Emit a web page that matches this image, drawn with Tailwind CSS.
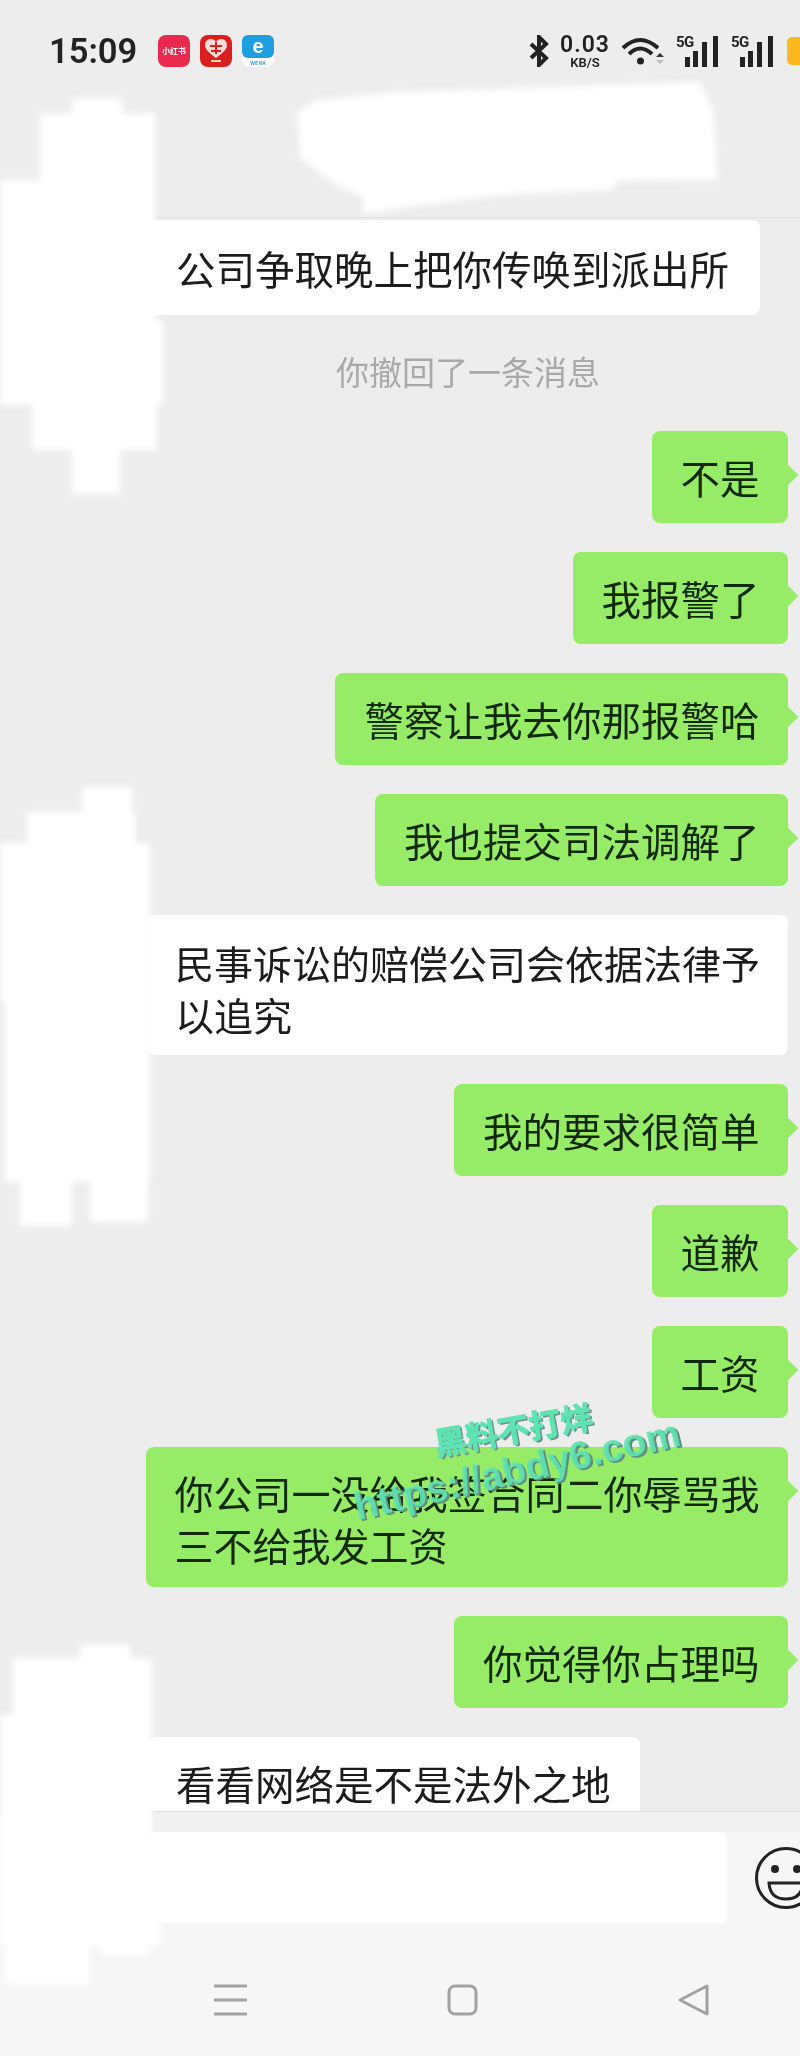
<!DOCTYPE html>
<html lang="zh-CN">
<head>
  <meta charset="UTF-8" />
  <meta name="viewport" content="width=device-width,initial-scale=1.0" />
  <title>聊天</title>
  <script src="https://cdn.jsdelivr.net/npm/@tailwindcss/browser@4"></script>
</head>
<body class="bg-[#ededed]">
  <div class="relative w-[800px] h-[2056px] overflow-hidden flex flex-col bg-[#ededed] blur-[0.5px] font-['Noto_Sans_CJK_SC','Noto_Sans',sans-serif] text-[#1c1c1c]">

    <!-- status bar + chat header -->
    <header class="h-[218px] shrink-0 border-b border-[#e2e2e2]">
      <div class="flex items-center justify-between h-[32px] mt-[35px] pl-[49px]">
        <div class="flex items-center">
          <span class="w-[87px] text-[34.5px] leading-none font-semibold font-['Roboto',sans-serif] text-[#222]">15:09</span>
          <div class="ml-[22px] flex gap-[10px]">
            <div class="w-[32px] h-[32px] rounded-[8px] bg-[#e9294d] flex items-center justify-center text-[8px] font-bold text-white overflow-hidden">小红书</div>
            <div class="w-[32px] h-[32px] rounded-[8px] bg-[#d91f1f] flex items-center justify-center">
              <svg width="24" height="26" viewBox="0 0 24 26"><path d="M12 20 C4 14 1 11 1 7 C1 3 4 1 7 1 C9 1 11 2 12 4 C13 2 15 1 17 1 C20 1 23 3 23 7 C23 11 20 14 12 20Z" fill="#f7dcd8"/><path d="M6 8h12M12 4v12M7 13h10" stroke="#d91f1f" stroke-width="2"/><rect x="7" y="22" width="10" height="2" fill="#f5d9a0"/></svg>
            </div>
            <div class="w-[32px] h-[32px] rounded-[8px] bg-white flex flex-col items-center">
              <div class="w-full h-[23px] bg-[#1f9fdf] rounded-[6px] flex items-center justify-center text-[20px] leading-[23px] font-bold text-white font-['Liberation_Sans',sans-serif]">e</div>
              <span class="text-[5px] leading-[9px] font-bold text-[#1f9fdf]">WE RA</span>
            </div>
          </div>
        </div>

        <div class="flex items-center text-[#222]">
          <svg width="20" height="32" viewBox="0 0 20 32" fill="none" stroke="#222" stroke-width="4"><path d="M2 9 L17 23 L10 30 L10 2 L17 9 L2 23"/></svg>
          <div class="ml-[11px] w-[50px] flex flex-col items-center font-['Roboto',sans-serif] font-semibold">
            <span class="text-[23px] leading-[23px] tracking-[1px]">0.03</span>
            <span class="text-[13px] leading-[13px]">KB/S</span>
          </div>
          <svg class="ml-[11px]" width="43" height="30" viewBox="0 0 43 30" fill="none" stroke="#222" stroke-width="4">
            <path d="M2 12 Q19 -4 37 12"/>
            <path d="M8 18 Q19 7 31 18"/>
            <circle cx="19.5" cy="25" r="3.5" fill="#222" stroke="none"/>
            <path d="M35 21 L39 17 L43 21Z" fill="#333" stroke="none"/>
            <path d="M35 24 L39 28 L43 24Z" fill="#bbb" stroke="none"/>
          </svg>
          <div class="ml-[12px] relative w-[42px] h-[31px]">
            <span class="absolute left-0 -top-[2px] text-[15px] leading-[16px] font-bold tracking-[-0.5px] font-['Roboto',sans-serif]">5G</span>
            <svg class="absolute inset-0" width="42" height="31" viewBox="0 0 42 31" fill="#222"><rect x="9" y="21" width="5" height="10"/><rect x="17" y="15" width="5" height="16"/><rect x="26" y="6" width="5" height="25"/><rect x="37" y="0" width="5" height="31"/></svg>
          </div>
          <div class="ml-[13px] relative w-[42px] h-[31px]">
            <span class="absolute left-0 -top-[2px] text-[15px] leading-[16px] font-bold tracking-[-0.5px] font-['Roboto',sans-serif]">5G</span>
            <svg class="absolute inset-0" width="42" height="31" viewBox="0 0 42 31" fill="#222"><rect x="9" y="21" width="5" height="10"/><rect x="17" y="15" width="5" height="16"/><rect x="26" y="6" width="5" height="25"/><rect x="37" y="0" width="5" height="31"/></svg>
          </div>
          <div class="ml-[14px] w-[13px] h-[28px] rounded-l-[5px] bg-[#fbb91f]"></div>
        </div>
      </div>
    </header>

    <!-- messages -->
    <main class="flex-1 overflow-hidden">
      <div class="ml-[148px] mt-[2px] w-fit bg-white rounded-[8px] pl-[28px] pr-[31px] pt-[22px] pb-[21px] text-[39.5px] leading-[52px]">公司争取晚上把你传唤到派出所</div>
      <p class="h-[116px] flex items-center justify-center pb-[2px] pl-[136px] text-[33px] text-[#a9a9a9]">你撤回了一条消息</p>

      <ul class="flex flex-col gap-[29px] text-[39.5px] leading-[52px]">
        <li class="relative self-end mr-[12px] rounded-[8px] bg-[#97ec67] px-[28.5px] py-[20px] text-[#14290c]">不是<i class="absolute -right-[7px] top-[36px] w-[16px] h-[16px] rotate-45 bg-[#97ec67]"></i></li>
        <li class="relative self-end mr-[12px] rounded-[8px] bg-[#97ec67] px-[28.5px] py-[20px] text-[#14290c]">我报警了<i class="absolute -right-[7px] top-[36px] w-[16px] h-[16px] rotate-45 bg-[#97ec67]"></i></li>
        <li class="relative self-end mr-[12px] rounded-[8px] bg-[#97ec67] pl-[29.5px] pr-[28.5px] py-[20px] text-[#14290c]">警察让我去你那报警哈<i class="absolute -right-[7px] top-[36px] w-[16px] h-[16px] rotate-45 bg-[#97ec67]"></i></li>
        <li class="relative self-end mr-[12px] rounded-[8px] bg-[#97ec67] pl-[29.5px] pr-[28.5px] py-[20px] text-[#14290c]">我也提交司法调解了<i class="absolute -right-[7px] top-[36px] w-[16px] h-[16px] rotate-45 bg-[#97ec67]"></i></li>
        <li class="self-end mr-[12px] rounded-[8px] bg-white px-[28px] pt-[21px] pb-[15px] text-[39px] leading-[52px]">民事诉讼的赔偿公司会依据法律予<br />以追究</li>
        <li class="relative self-end mr-[12px] rounded-[8px] bg-[#97ec67] pl-[29.5px] pr-[28.5px] py-[20px] text-[#14290c]">我的要求很简单<i class="absolute -right-[7px] top-[36px] w-[16px] h-[16px] rotate-45 bg-[#97ec67]"></i></li>
        <li class="relative self-end mr-[12px] rounded-[8px] bg-[#97ec67] px-[28.5px] py-[20px] text-[#14290c]">道歉<i class="absolute -right-[7px] top-[36px] w-[16px] h-[16px] rotate-45 bg-[#97ec67]"></i></li>
        <li class="relative self-end mr-[12px] rounded-[8px] bg-[#97ec67] px-[28.5px] py-[20px] text-[#14290c]">工资<i class="absolute -right-[7px] top-[36px] w-[16px] h-[16px] rotate-45 bg-[#97ec67]"></i></li>
        <li class="relative self-end mr-[12px] rounded-[8px] bg-[#97ec67] px-[28.5px] pt-[19px] pb-[17px] text-[39px] leading-[52px] text-[#14290c]">你公司一没给我签合同二你辱骂我<br />三不给我发工资<i class="absolute -right-[7px] top-[36px] w-[16px] h-[16px] rotate-45 bg-[#97ec67]"></i></li>
        <li class="relative self-end mr-[12px] rounded-[8px] bg-[#97ec67] pl-[29.5px] pr-[28.5px] py-[20px] text-[#14290c]">你觉得你占理吗<i class="absolute -right-[7px] top-[36px] w-[16px] h-[16px] rotate-45 bg-[#97ec67]"></i></li>
        <li class="self-start ml-[148px] rounded-[8px] bg-white pl-[28px] pr-[29.5px] py-[20px]">看看网络是不是法外之地</li>
      </ul>
    </main>

    <!-- input bar + nav -->
    <footer class="h-[245px] shrink-0 border-t border-[#dedede] bg-[#f6f6f6]">
      <div class="h-[20px] bg-[#f1f1f1]"></div>
      <div class="flex items-center pl-[150px]">
        <div class="w-[577px] h-[91px] shrink-0 rounded-[6px] bg-white"></div>
        <svg class="ml-[28px] shrink-0" width="62" height="62" viewBox="0 0 62 62" fill="none" stroke="#222" stroke-width="3">
          <circle cx="31" cy="31" r="29.5"/>
          <circle cx="20" cy="22" r="4" fill="#222" stroke="none"/>
          <circle cx="42" cy="22" r="4" fill="#222" stroke="none"/>
          <path d="M14 36 H48 Q47 52 31 52 Q15 52 14 36Z"/>
        </svg>
      </div>
      <div class="flex items-center mt-[61px] pl-[214px] gap-[200px]">
        <svg width="33" height="32" viewBox="0 0 33 32" fill="none" stroke="#a2a2a2" stroke-width="3"><path d="M0 2H33M0 16H33M0 30H33"/></svg>
        <svg width="31" height="32" viewBox="0 0 31 32" fill="none" stroke="#a2a2a2" stroke-width="3"><rect x="2" y="2" width="27" height="28" rx="6"/></svg>
        <svg width="32" height="32" viewBox="0 0 32 32" fill="none" stroke="#a2a2a2" stroke-width="3" stroke-linejoin="round"><path d="M29 2 L2 16 L29 30Z"/></svg>
      </div>
    </footer>

    <!-- white smears over the names and avatars -->
    <div class="absolute inset-0 blur-[3px] pointer-events-none">
      <div class="absolute left-[72px] top-[98px] w-[50px] h-[40px] bg-white"></div>
      <div class="absolute left-[40px] top-[113px] w-[115px] h-[80px] bg-white"></div>
      <div class="absolute left-0 top-[180px] w-[155px] h-[225px] bg-white"></div>
      <div class="absolute left-[6px] top-[320px] w-[157px] h-[85px] bg-white"></div>
      <div class="absolute left-[32px] top-[400px] w-[125px] h-[50px] bg-white"></div>
      <div class="absolute left-[72px] top-[445px] w-[48px] h-[50px] bg-white"></div>

      <div class="absolute left-[82px] top-[787px] w-[50px] h-[40px] bg-white"></div>
      <div class="absolute left-[27px] top-[812px] w-[108px] h-[40px] bg-white"></div>
      <div class="absolute left-0 top-[843px] w-[150px] h-[160px] bg-white"></div>
      <div class="absolute left-[5px] top-[1000px] w-[145px] h-[182px] bg-white"></div>
      <div class="absolute left-[20px] top-[1178px] w-[52px] h-[48px] bg-white"></div>
      <div class="absolute left-[90px] top-[1178px] w-[58px] h-[44px] bg-white"></div>

      <div class="absolute left-[80px] top-[1645px] w-[50px] h-[40px] bg-white"></div>
      <div class="absolute left-[13px] top-[1658px] w-[139px] h-[62px] bg-white"></div>
      <div class="absolute left-0 top-[1715px] w-[152px] h-[205px] bg-white"></div>
      <div class="absolute left-0 top-[1918px] w-[160px] h-[27px] bg-white"></div>
      <div class="absolute left-[100px] top-[1943px] w-[50px] h-[12px] bg-white"></div>
      <div class="absolute left-[5px] top-[1943px] w-[85px] h-[42px] bg-white"></div>

      <svg class="absolute left-0 top-0" width="800" height="230" viewBox="0 0 800 230" fill="#fff">
        <path d="M297 113 L316 100 L400 92 L700 82 L713 110 L718 180 L617 181 L613 190 L500 195 L400 208 L363 214 L363 197 L333 183 L300 157Z"/>
      </svg>
    </div>

    <!-- watermark -->
    <span class="absolute left-[433px] top-[1408px] -rotate-[10deg] text-[32px] leading-[40px] font-bold text-[#5fe3b3] [-webkit-text-stroke:1px_#5fe3b3] [text-shadow:2px_2px_0_#6f8f8b]">黑料不打烊</span>
    <span class="absolute left-[350px] top-[1447px] -rotate-[13deg] text-[39px] leading-[46px] font-bold font-['Liberation_Sans',sans-serif] text-[#5fe3b3]/90 [text-shadow:2px_2px_0_#5f8f7f]">https://abdy6.com</span>
  </div>
</body>
</html>
